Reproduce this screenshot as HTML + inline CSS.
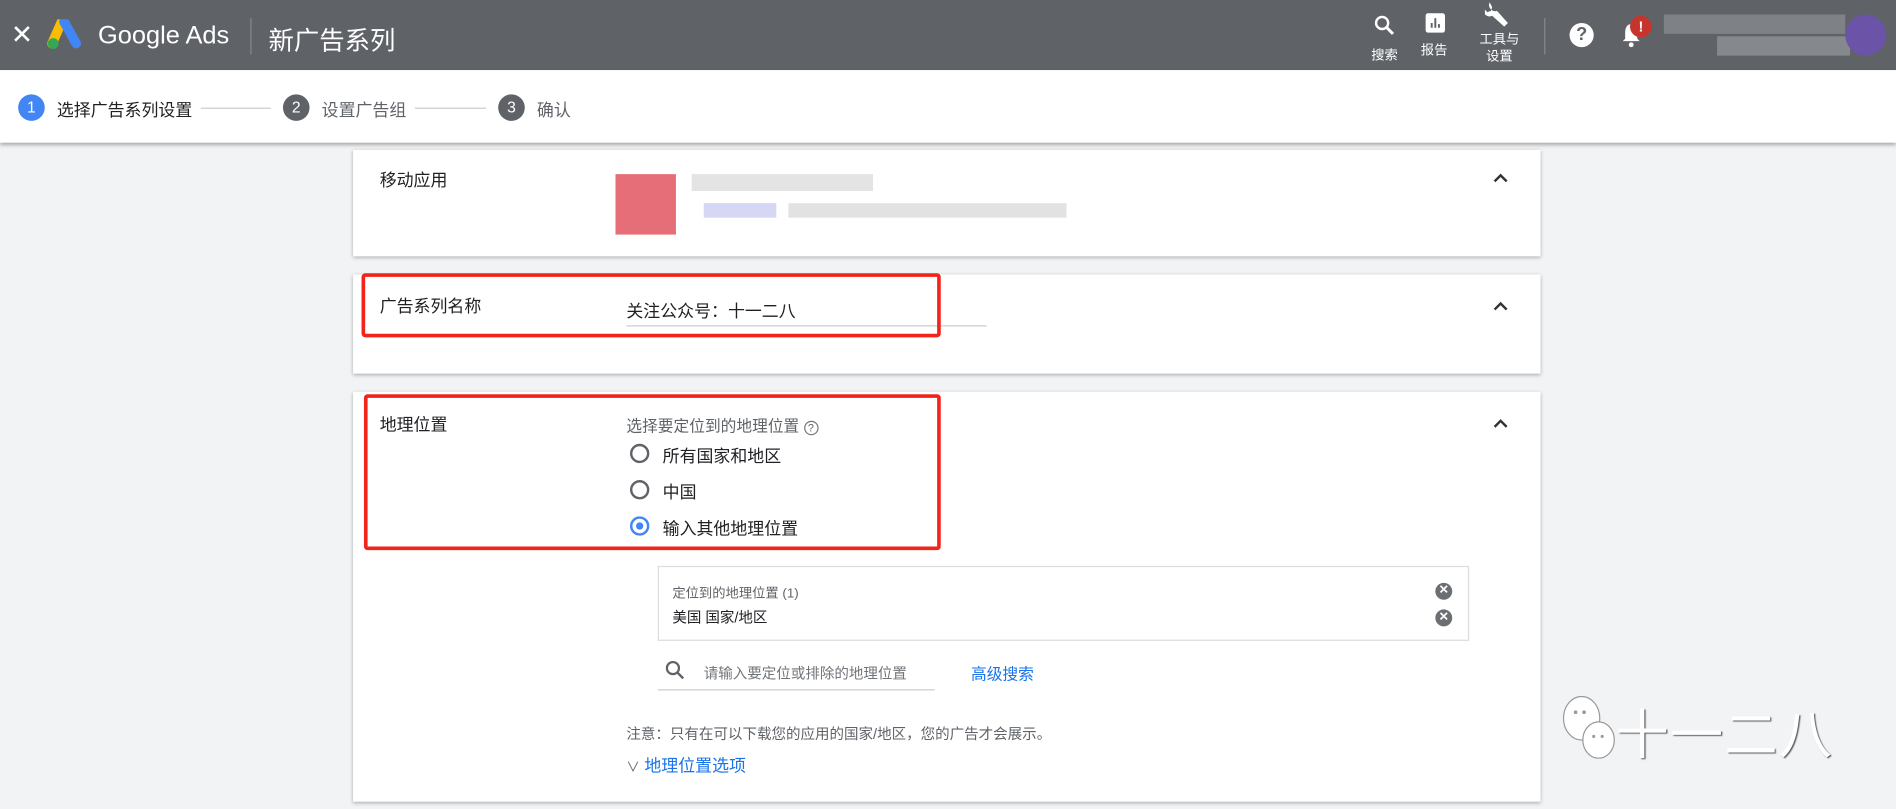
<!DOCTYPE html>
<html><head><meta charset="utf-8"><style>
html,body{margin:0;padding:0;width:1896px;height:809px;overflow:hidden;background:#f1f3f4}
#w{position:absolute;left:0;top:0;width:1568px;height:669px;transform:scale(1.2092);transform-origin:0 0;font-family:"Liberation Sans","Noto Sans CJK SC",sans-serif;color:#202124}
.a{position:absolute}
.hdr{left:0;top:0;width:1568px;height:58px;background:#5f6368;color:#fff}
.step{left:0;top:58px;width:1568px;height:60px;background:#fff;box-shadow:0 2px 3px rgba(0,0,0,.3)}
.circ{width:22px;height:22px;border-radius:50%;color:#fff;font-size:13px;text-align:center;line-height:22px}
.card{left:292px;width:982px;background:#fff;box-shadow:0 1px 3px rgba(0,0,0,.3)}
.lbl{font-size:14px}
.red{border:3px solid #f2231a;border-radius:3px;box-sizing:border-box}
.radio{width:16px;height:16px;border:2px solid #5f6368;border-radius:50%;box-sizing:border-box}
.sm{font-size:13px}
.x{width:14px;height:14px;border-radius:50%;background:#6b6e72;color:#fff;font-size:10px;text-align:center;line-height:14px;font-weight:bold}
</style></head><body><div id="w">
<div class="a hdr">
 <div class="a" style="left:9px;top:16px;font-size:22px">✕</div>
 <svg class="a" style="left:39px;top:16px" width="30" height="26" viewBox="0 0 30 26"><path d="M12 2 L4 20" stroke="#fbbc04" stroke-width="8" stroke-linecap="round"/><path d="M14 2 L24 20" stroke="#4285f4" stroke-width="8" stroke-linecap="round"/><circle cx="5" cy="20" r="4.5" fill="#34a853"/></svg>
 <div class="a" style="left:81px;top:18px;font-size:21px">Google Ads</div>
 <div class="a" style="left:207px;top:15px;width:1px;height:30px;background:#888"></div>
 <div class="a" style="left:222px;top:18px;font-size:21px">新广告系列</div>
 <svg class="a" style="left:1136px;top:12px" width="18" height="18" viewBox="0 0 18 18"><circle cx="7" cy="7" r="5" stroke="#fff" stroke-width="2" fill="none"/><path d="M11 11l5 5" stroke="#fff" stroke-width="2.4"/></svg>
 <div class="a" style="left:1134px;top:37px;font-size:11px">搜索</div>
 <svg class="a" style="left:1178px;top:10px" width="18" height="18"><rect x="1" y="1" width="16" height="16" rx="2" fill="#fff"/><path d="M6 13V9M9 13V5M12 13V10" stroke="#5f6368" stroke-width="1.6"/></svg>
 <div class="a" style="left:1175px;top:33px;font-size:11px">报告</div>
 <svg class="a" style="left:1228px;top:0px" width="24" height="24" viewBox="0 0 24 24"><path d="M4 2a5 5 0 0 0 6 7l9 10-3 3-10-9a5 5 0 0 1-7-6l3 3 3-1 1-3z" fill="#fff"/></svg>
 <div class="a" style="left:1223px;top:26px;font-size:11px;line-height:14px;text-align:center;width:34px">工具与<br>设置</div>
 <div class="a" style="left:1277px;top:15px;width:1px;height:30px;background:#888"></div>
 <div class="a" style="left:1298px;top:19px;width:20px;height:20px;border-radius:50%;background:#fff;color:#5f6368;font-size:15px;font-weight:bold;text-align:center;line-height:20px">?</div>
 <svg class="a" style="left:1339px;top:18px" width="20" height="22" viewBox="0 0 20 22"><path d="M10 2c-4 0-5 4-5 7v5l-2 2h14l-2-2V9c0-3-1-7-5-7z" fill="#fff"/><circle cx="10" cy="19" r="2" fill="#fff"/></svg>
 <div class="a" style="left:1348px;top:13px;width:18px;height:18px;border-radius:50%;background:#c5352c;font-size:12px;text-align:center;line-height:18px;font-weight:bold">!</div>
 <div class="a" style="left:1376px;top:12px;width:150px;height:16px;background:#868a8f;opacity:.8"></div>
 <div class="a" style="left:1420px;top:30px;width:110px;height:16px;background:#8e9196;opacity:.8"></div>
 <div class="a" style="left:1526px;top:12px;width:34px;height:34px;border-radius:50%;background:#6b53a8"></div>
</div>
<div class="a step">
 <div class="a circ" style="left:15px;top:20px;background:#4285f4">1</div>
 <div class="a lbl" style="left:47px;top:23px">选择广告系列设置</div>
 <div class="a" style="left:166px;top:31px;width:58px;height:1px;background:#ccc"></div>
 <div class="a circ" style="left:234px;top:20px;background:#5f6368">2</div>
 <div class="a lbl" style="left:266px;top:23px;color:#5f6368">设置广告组</div>
 <div class="a" style="left:343px;top:31px;width:59px;height:1px;background:#ccc"></div>
 <div class="a circ" style="left:412px;top:20px;background:#5f6368">3</div>
 <div class="a lbl" style="left:444px;top:23px;color:#5f6368">确认</div>
</div>
<div class="a card" style="top:124px;height:88px">
 <div class="a lbl" style="left:22px;top:15px">移动应用</div>
 <div class="a" style="left:217px;top:20px;width:50px;height:50px;background:#e05560;opacity:.85"></div>
 <div class="a" style="left:280px;top:20px;width:150px;height:14px;background:#e4e4e4"></div>
 <div class="a" style="left:290px;top:44px;width:60px;height:12px;background:#d6d6f5"></div>
 <div class="a" style="left:360px;top:44px;width:230px;height:12px;background:#e2e2e2"></div>
 <svg class="a" style="left:943px;top:19px" width="12" height="8"><path d="M1 7l5-5 5 5" stroke="#333" stroke-width="2" fill="none"/></svg>
</div>
<div class="a card" style="top:227px;height:82px">
 <div class="a lbl" style="left:22px;top:16px">广告系列名称</div>
 <div class="a lbl" style="left:226px;top:20px">关注公众号：十一二八</div>
 <div class="a" style="left:226px;top:42px;width:298px;height:1px;background:#ccc"></div>
 <svg class="a" style="left:943px;top:22px" width="12" height="8"><path d="M1 7l5-5 5 5" stroke="#333" stroke-width="2" fill="none"/></svg>
</div>
<div class="a red" style="left:299px;top:226px;width:479px;height:53px"></div>
<div class="a card" style="top:324px;height:339px">
 <div class="a lbl" style="left:22px;top:17px">地理位置</div>
 <div class="a sm" style="left:226px;top:18px;color:#5f6368">选择要定位到的地理位置 <span style="display:inline-block;width:10px;height:10px;border:1px solid #777;border-radius:50%;font-size:9px;line-height:10px;text-align:center">?</span></div>
 <div class="a radio" style="left:229px;top:43px"></div><div class="a lbl" style="left:256px;top:43px">所有国家和地区</div>
 <div class="a radio" style="left:229px;top:73px"></div><div class="a lbl" style="left:256px;top:73px">中国</div>
 <div class="a radio" style="left:229px;top:103px;border-color:#4285f4"><div style="margin:3px;width:6px;height:6px;border-radius:50%;background:#4285f4"></div></div><div class="a lbl" style="left:256px;top:103px">输入其他地理位置</div>
 <svg class="a" style="left:943px;top:22px" width="12" height="8"><path d="M1 7l5-5 5 5" stroke="#333" stroke-width="2" fill="none"/></svg>
 <div class="a" style="left:252px;top:144px;width:669px;height:60px;border:1px solid #dadce0"></div>
 <div class="a" style="left:264px;top:158px;font-size:11px;color:#5f6368">定位到的地理位置 (1)</div>
 <div class="a" style="left:264px;top:178px;font-size:12px">美国 国家/地区</div>
 <div class="a x" style="left:895px;top:158px">✕</div>
 <div class="a x" style="left:895px;top:180px">✕</div>
 <svg class="a" style="left:258px;top:222px" width="16" height="16"><circle cx="6.5" cy="6.5" r="5" stroke="#5f6368" stroke-width="1.8" fill="none"/><path d="M10 10l5 5" stroke="#5f6368" stroke-width="2"/></svg>
 <div class="a" style="left:290px;top:224px;font-size:12px;color:#70757a">请输入要定位或排除的地理位置</div>
 <div class="a" style="left:252px;top:246px;width:229px;height:1px;background:#ccc"></div>
 <div class="a sm" style="left:511px;top:223px;color:#1a73e8">高级搜索</div>
 <div class="a" style="left:226px;top:274px;font-size:12px;color:#5f6368">注意：只有在可以下载您的应用的国家/地区，您的广告才会展示。</div>
 <div class="a lbl" style="left:226px;top:299px;color:#1a73e8"><span style="color:#5f6368;font-size:11px">∨</span> 地理位置选项</div>
</div>
<div class="a red" style="left:301px;top:326px;width:477px;height:129px"></div>
<svg class="a" style="left:1290px;top:572px" width="70" height="66" viewBox="0 0 70 66"><ellipse cx="18" cy="22" rx="15" ry="18" fill="#fff" stroke="#999"/><ellipse cx="32" cy="40" rx="13" ry="15" fill="#fff" stroke="#999"/><circle cx="13" cy="17" r="1.5" fill="#999"/><circle cx="20" cy="17" r="1.5" fill="#999"/><circle cx="28" cy="37" r="1.3" fill="#999"/><circle cx="35" cy="37" r="1.3" fill="#999"/></svg>
<div class="a" style="left:1336px;top:572px;font-size:44px;color:#fff;text-shadow:1px 1px 1px #555;letter-spacing:1px">十一二八</div>
</div></body></html>
